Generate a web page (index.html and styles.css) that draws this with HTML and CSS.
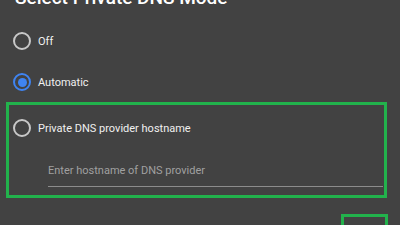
FILE: index.html
```html
<!DOCTYPE html>
<html>
<head>
<meta charset="utf-8">
<link rel="stylesheet" href="styles.css">
</head>
<body>
<div class="dialog">
  <div class="title">Select Private DNS Mode</div>
  <div class="option opt-off">
    <span class="radio"></span>
    <span class="label">Off</span>
  </div>
  <div class="option opt-auto">
    <span class="radio checked"></span>
    <span class="label">Automatic</span>
  </div>
  <div class="highlight">
    <div class="option opt-host">
      <span class="radio"></span>
      <span class="label">Private DNS provider hostname</span>
    </div>
    <div class="input">Enter hostname of DNS provider</div>
  </div>
  <div class="actions">
    <span class="btn cancel">CANCEL</span>
    <span class="save-box"><span class="btn save">SAVE</span></span>
  </div>
</div>
</body>
</html>
```
FILE: styles.css
```css
html, body {
  margin: 0;
  padding: 0;
  background: #424242;
  overflow: hidden;
}
body {
  width: 400px;
  height: 225px;
  font-family: Roboto, "Noto Sans", sans-serif;
}
.dialog {
  display: flex;
  flex-direction: column;
}
.title {
  margin-top: -14px;
  height: 24px;
  line-height: 24px;
  padding-left: 15px;
  font-size: 19px;
  font-weight: 500;
  color: #ffffff;
  white-space: nowrap;
  margin-bottom: 10px;
}
.option {
  display: flex;
  align-items: center;
  gap: 7px;
  padding-left: 13px;
  font-size: 11px;
  color: #f0f0f0;
}
.opt-off { height: 42px; }
.opt-auto { height: 40px; }
.radio {
  width: 18px;
  height: 18px;
  box-sizing: border-box;
  border: 2px solid #c8c8c8;
  border-radius: 50%;
  flex: none;
  display: flex;
  align-items: center;
  justify-content: center;
}
.radio.checked {
  border-color: #3f84f2;
}
.radio.checked::after {
  content: "";
  width: 9px;
  height: 9px;
  border-radius: 50%;
  background: #3f84f2;
}
.highlight {
  margin-left: 6px;
  width: 381px;
  box-sizing: border-box;
  border: 3px solid #22b24c;
  padding-bottom: 8px;
}
.opt-host {
  height: 46px;
  padding-left: 4px;
}
.input {
  margin-left: 39px;
  margin-right: 1px;
  padding-top: 13px;
  padding-bottom: 8px;
  line-height: 14px;
  font-size: 11px;
  color: #a0a0a0;
  border-bottom: 1px solid #8c8c8c;
}
.actions {
  display: flex;
  justify-content: flex-end;
  align-items: flex-start;
  margin-top: 16px;
  padding-right: 12px;
  height: 11px;
  overflow: hidden;
}
.btn {
  font-size: 11px;
  font-weight: 500;
  color: #3b72c4;
  line-height: 14px;
  letter-spacing: 0.5px;
}
.cancel {
  margin-right: 21px;
  padding-top: 9px;
}
.save-box {
  width: 47px;
  height: 20px;
  box-sizing: border-box;
  border: 3px solid #22b24c;
  border-bottom: none;
  display: flex;
  justify-content: center;
  padding-top: 6px;
}
```
